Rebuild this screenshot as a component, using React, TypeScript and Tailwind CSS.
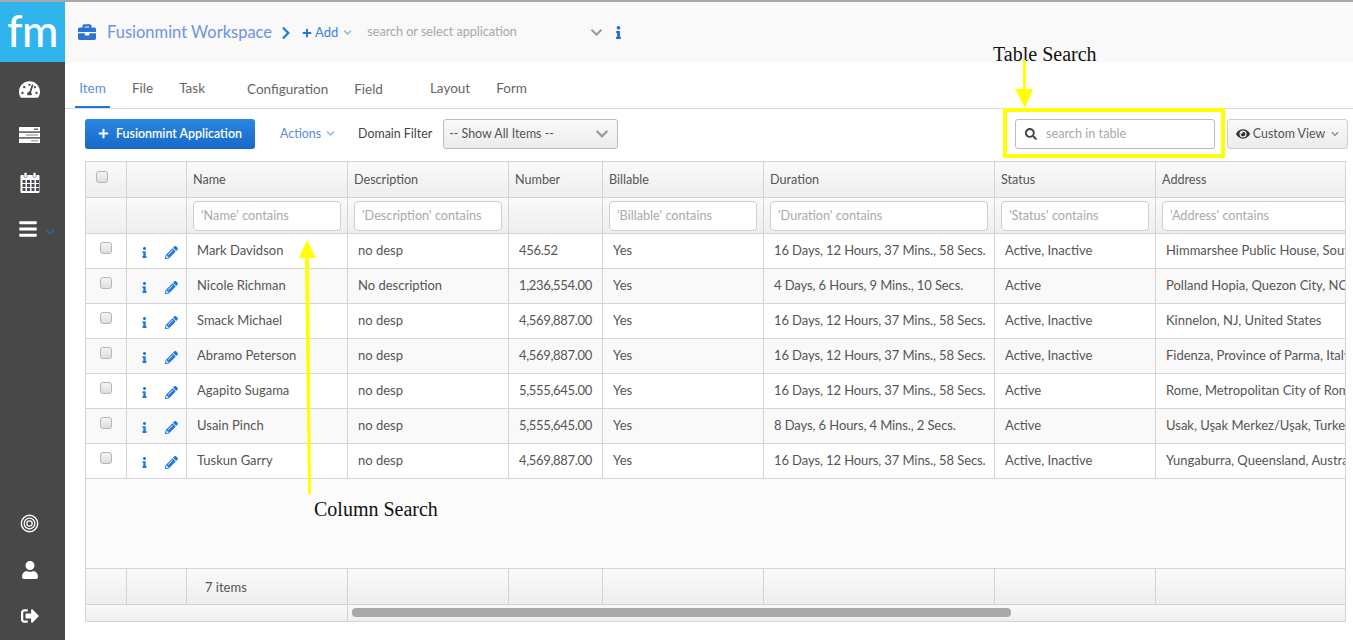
import {
  FaBars,
  FaBriefcase,
  FaChevronDown,
  FaChevronRight,
  FaEye,
  FaInfo,
  FaPencilAlt,
  FaPlus,
  FaSearch,
  FaSignOutAlt,
  FaTachometerAlt,
  FaUser,
} from 'react-icons/fa';

const rows = [
  ['Mark Davidson', 'no desp', '456.52', 'Yes', '16 Days, 12 Hours, 37 Mins., 58 Secs.', 'Active, Inactive', 'Himmarshee Public House, South Florida'],
  ['Nicole Richman', 'No description', '1,236,554.00', 'Yes', '4 Days, 6 Hours, 9 Mins., 10 Secs.', 'Active', 'Polland Hopia, Quezon City, NCR, Philippines'],
  ['Smack Michael', 'no desp', '4,569,887.00', 'Yes', '16 Days, 12 Hours, 37 Mins., 58 Secs.', 'Active, Inactive', 'Kinnelon, NJ, United States'],
  ['Abramo Peterson', 'no desp', '4,569,887.00', 'Yes', '16 Days, 12 Hours, 37 Mins., 58 Secs.', 'Active, Inactive', 'Fidenza, Province of Parma, Italy'],
  ['Agapito Sugama', 'no desp', '5,555,645.00', 'Yes', '16 Days, 12 Hours, 37 Mins., 58 Secs.', 'Active', 'Rome, Metropolitan City of Rome, Italy'],
  ['Usain Pinch', 'no desp', '5,555,645.00', 'Yes', '8 Days, 6 Hours, 4 Mins., 2 Secs.', 'Active', 'Usak, Uşak Merkez/Uşak, Turkey'],
  ['Tuskun Garry', 'no desp', '4,569,887.00', 'Yes', '16 Days, 12 Hours, 37 Mins., 58 Secs.', 'Active, Inactive', 'Yungaburra, Queensland, Australia'],
];

const columns = ['Name', 'Description', 'Number', 'Billable', 'Duration', 'Status', 'Address'];
const gridCols = 'grid grid-cols-[41px_60px_161px_161px_94px_161px_231px_161px_400px] w-max';
const cell = 'border-r border-[#d4d4d4] min-w-0';
const headGrad = 'bg-gradient-to-b from-[#fafafa] to-[#eeeeee]';
// digits run wider in Lato than in the original font
const cellSize = ['', '', 'tracking-[-0.33px]', '', 'tracking-[-0.1px]', '', ''];

function Check() {
  return <div className="w-[12px] h-[12px] rounded-[3px] border border-[#b5b5b5] bg-gradient-to-b from-[#f4f4f4] to-[#dedede]" />;
}

function Bullseye() {
  return (
    <svg viewBox="0 0 20 20" className="w-[19px] h-[19px]" fill="none" stroke="white">
      <circle cx="10" cy="10" r="8.6" strokeWidth="1.5" />
      <circle cx="10" cy="10" r="5.6" strokeWidth="1.3" />
      <circle cx="10" cy="10" r="2.8" strokeWidth="1.3" />
    </svg>
  );
}

function ServerIcon() {
  return (
    <svg viewBox="0 0 21 16" className="mt-[27px] ml-[-6px] w-[21px] h-[16px]">
      <rect x="0" y="0" width="21" height="4.4" fill="white" />
      <rect x="0" y="5.8" width="21" height="4.4" fill="white" />
      <rect x="0" y="11.6" width="21" height="4.4" fill="white" />
      <rect x="15" y="1.6" width="4" height="1.2" fill="#444" />
      <rect x="7" y="7.4" width="12" height="1.2" fill="#999" />
      <rect x="12" y="13.2" width="7" height="1.2" fill="#999" />
    </svg>
  );
}

function CalendarIcon() {
  const cells = [7, 11.5, 16, 2.5];
  return (
    <svg viewBox="0 0 20 21" className="mt-[29px] ml-[-6px] w-[20px] h-[21px]">
      <rect x="0.5" y="3" width="19" height="18" rx="1" fill="white" />
      <rect x="4" y="0.5" width="3" height="5" rx="1.2" fill="white" stroke="#484848" strokeWidth="0.6" />
      <rect x="13" y="0.5" width="3" height="5" rx="1.2" fill="white" stroke="#484848" strokeWidth="0.6" />
      {[8, 12, 16].map((y) =>
        cells.map((x) => <rect key={`${x}-${y}`} x={x} y={y} width="3" height="3" fill="#444a5c" />),
      )}
    </svg>
  );
}

function Sidebar() {
  return (
    <div className="w-[65px] shrink-0 h-[638px] flex flex-col bg-[#484848] text-white">
      <div className="h-[60px] bg-[#2fb4ee] flex items-center justify-center text-[44px] leading-none font-['Lato',sans-serif] font-medium pb-[5px] tracking-[-0.5px]">fm</div>
      <div className="flex-1 flex flex-col items-center">
        <FaTachometerAlt className="mt-[17px] ml-[-6px] text-[21px]" />
        <ServerIcon />
        <CalendarIcon />
        <div className="mt-[26px] ml-[7px] flex items-center gap-[7px]">
          <FaBars className="text-[20px]" />
          <FaChevronDown className="text-[10px] text-[#2c62a8] mt-[5px]" />
        </div>
        <div className="mt-auto ml-[-6px] flex flex-col items-center gap-[28px] pb-[15px]">
          <Bullseye />
          <FaUser className="text-[18px]" />
          <FaSignOutAlt className="text-[18px]" />
        </div>
      </div>
    </div>
  );
}

function TopBar() {
  return (
    <div className="h-[60px] bg-[#f9f9f9] flex items-center pl-[13px] pt-[1px]">
      <FaBriefcase className="mb-[2px] text-[18px] text-[#2c73d2]" />
      <span className="ml-[11px] text-[16.5px] text-[#6f93dd]">Fusionmint Workspace</span>
      <FaChevronRight className="ml-[7px] text-[14px] text-[#1f78e0]" />
      <FaPlus className="ml-[9px] text-[10px] text-[#1f78e0]" />
      <span className="ml-[3px] text-[13px] text-[#3a7fdc]">Add</span>
      <FaChevronDown className="ml-[5px] text-[9px] text-[#8fb3df]" />
      <span className="ml-[15px] w-[223px] text-[12.6px] text-[#a8a8a8]">search or select application</span>
      <FaChevronDown className="text-[13px] text-[#9a9a9a]" />
      <FaInfo className="ml-[9px] text-[13px] text-[#1f6fe0]" />
    </div>
  );
}

function Tabs() {
  return (
    <div className="h-[47px] border-b border-[#dcdcdc] flex text-[13.5px] text-[#666] pl-[10px]">
      <div className="h-[46px] w-[35px] border-b-2 border-[#1f78d1] text-[#5b8fe0] flex justify-center pt-[16px]">Item</div>
      <span className="ml-[22px] pt-[16px]">File</span>
      <span className="ml-[26px] pt-[16px]">Task</span>
      <span className="ml-[42px] pt-[17px]">Configuration</span>
      <span className="ml-[26px] pt-[17px]">Field</span>
      <span className="ml-[47px] pt-[16px]">Layout</span>
      <span className="ml-[26px] pt-[16px]">Form</span>
    </div>
  );
}

function Toolbar() {
  return (
    <div className="h-[52px] flex items-center pl-[20px] pr-[5px] text-[12.4px] pb-[3px]">
      <button className="w-[170px] h-[30px] pt-[2px] rounded-[3px] bg-gradient-to-b from-[#2a87e0] to-[#1868c8] text-white font-semibold flex items-center justify-center gap-[7px]">
        <FaPlus className="text-[11px] mb-[2px]" />
        Fusionmint Application
      </button>
      <span className="ml-[25px] pt-[2px] text-[#5b8ad6]">Actions</span>
      <FaChevronDown className="ml-[5px] text-[9px] text-[#8fb3df]" />
      <span className="ml-[23px] pt-[2px] text-[#444]">Domain Filter</span>
      <div className="ml-[11px] w-[175px] h-[30px] rounded-[3px] border border-[#bdbdbd] bg-gradient-to-b from-[#fafafa] to-[#ececec] flex items-center justify-between pl-[5px] pr-[8px] pt-[1px] text-[#555]">
        -- Show All Items --
        <FaChevronDown className="text-[14px] text-[#999]" />
      </div>
      <div className="ml-auto w-[200px] h-[30px] rounded-[3px] border border-[#bdbdbd] bg-white flex items-center pl-[9px] pt-[1px] text-[#aaa] text-[12.7px]">
        <FaSearch className="text-[12px] text-[#444] mr-[9px]" />
        search in table
      </div>
      <div className="ml-[12px] w-[121px] h-[30px] rounded-[3px] border border-[#cfcfcf] bg-gradient-to-b from-[#fafafa] to-[#ececec] flex items-center justify-center gap-[3px] pt-[1px] text-[#555]">
        <FaEye className="text-[14px] text-[#333]" />
        Custom View
        <FaChevronDown className="ml-[3px] text-[8px] text-[#888]" />
      </div>
    </div>
  );
}

function DataTable() {
  return (
    <div className="ml-[20px] w-[1261px] h-[461px] border border-[#d4d4d4] overflow-hidden flex flex-col bg-[#fbfbfb] text-[13px] text-[#555]">
      <div className={`${gridCols} h-[36px] ${headGrad} border-b border-[#d4d4d4] text-[12.6px]`}>
        <div className={`${cell} pl-[10px] pt-[9px]`}><Check /></div>
        <div className={cell} />
        {columns.map((c) => (
          <div key={c} className={`${cell} pl-[6px] pt-[1px] flex items-center`}>{c}</div>
        ))}
      </div>
      <div className={`${gridCols} h-[36px] ${headGrad} border-b border-[#d4d4d4] text-[12.7px]`}>
        <div className={cell} />
        <div className={cell} />
        {columns.map((c) => (
          <div key={c} className={`${cell} pl-[6px] pr-[6px] flex items-center`}>
            {c !== 'Number' && (
              <div className="w-full h-[30px] rounded-[4px] border border-[#cfcfcf] bg-white pl-[7px] flex items-center text-[#aaa]">
                '{c}' contains
              </div>
            )}
          </div>
        ))}
      </div>
      {rows.map((r, i) => (
        <div key={r[0]} className={`${gridCols} h-[35px] border-b border-[#d4d4d4] ${i % 2 ? 'bg-[#f9f9f9]' : 'bg-white'}`}>
          <div className={`${cell} pl-[14px] pt-[8px]`}><Check /></div>
          <div className={`${cell} flex items-center pl-[12px] pt-[2px] text-[#1f78e0]`}>
            <FaInfo className="text-[11px]" />
            <FaPencilAlt className="ml-[15px] text-[13px]" />
          </div>
          {r.map((v, j) => (
            <div key={j} className={`${cell} ${cellSize[j]} pl-[10px] flex items-center whitespace-nowrap overflow-hidden`}>{v}</div>
          ))}
        </div>
      ))}
      <div className="flex-1" />
      <div className={`${gridCols} h-[37px] ${headGrad} border-t border-b border-[#d4d4d4]`}>
        <div className={cell} />
        <div className={cell} />
        <div className={`${cell} pl-[18px] pt-[2px] flex items-center`}>7 items</div>
        <div className={cell} />
        <div className={cell} />
        <div className={cell} />
        <div className={cell} />
        <div className={cell} />
        <div />
      </div>
      <div className={`h-[16px] flex ${headGrad}`}>
        <div className="w-[262px] border-r border-[#d4d4d4]" />
        <div className="ml-[4px] mt-[3px] w-[659px] h-[9px] rounded-[4px] bg-[#a9a9a9]" />
      </div>
    </div>
  );
}

function Annotations() {
  return (
    <>
      <span className="absolute left-[993px] top-[43px] whitespace-nowrap text-[20px] leading-[23px] text-[#111] font-['Liberation_Serif',serif]">Table Search</span>
      <span className="absolute left-[314px] top-[498px] whitespace-nowrap text-[20px] leading-[23px] text-[#111] font-['Liberation_Serif',serif]">Column Search</span>
      <div className="absolute left-[1003px] top-[108px] w-[222px] h-[50px] border-[4px] border-[#ffff00] rounded-[1px]" />
      <svg className="absolute left-[1010px] top-[58px] w-[30px] h-[52px]" viewBox="0 0 30 52">
        <rect x="13" y="2" width="3" height="32" fill="#ffff00" />
        <polygon points="5,31 23,31 15,50" fill="#ffff00" />
      </svg>
      <svg className="absolute left-[295px] top-[236px] w-[30px] h-[260px]" viewBox="0 0 30 260">
        <polygon points="12,4 21,22 4,22" fill="#ffff00" />
        <polygon points="10,20 14,20 16,258 13,258" fill="#ffff00" />
      </svg>
    </>
  );
}

export default function App() {
  return (
    <div className="relative w-[1353px] h-[640px] overflow-hidden bg-white border-t-2 border-[#a9a9a9] font-['Lato',sans-serif] flex">
      <Sidebar />
      <div className="flex-1 min-w-0">
        <TopBar />
        <Tabs />
        <Toolbar />
        <DataTable />
      </div>
      <div className="absolute left-0 top-[-2px]">
        <Annotations />
      </div>
    </div>
  );
}
